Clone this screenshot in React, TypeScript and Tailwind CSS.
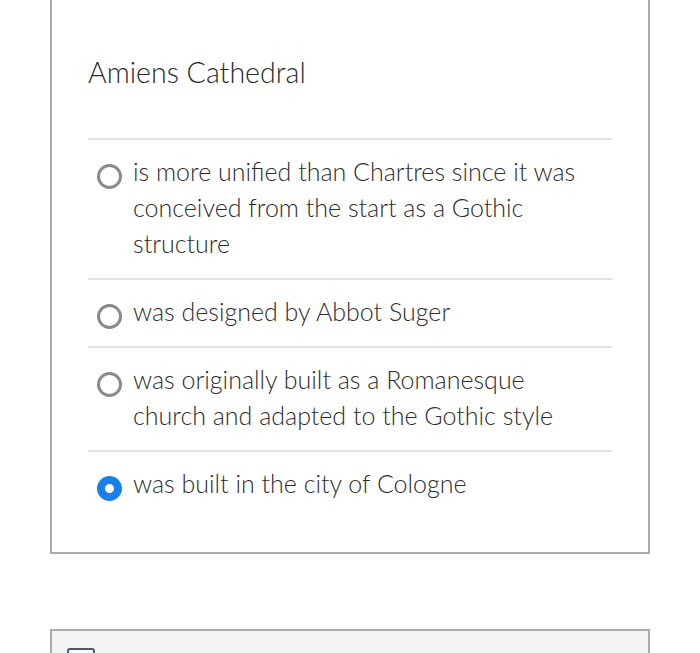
const options = [
  {
    text: 'is more unified than Chartres since it was conceived from the start as a Gothic structure',
    selected: false,
  },
  { text: 'was designed by Abbot Suger', selected: false },
  {
    text: 'was originally built as a Romanesque church and adapted to the Gothic style',
    selected: false,
  },
  { text: 'was built in the city of Cologne', selected: true },
];

function Radio({ selected }: { selected: boolean }) {
  return selected ? (
    <span className="mt-[11px] ml-[9px] box-border h-[25px] w-[25px] shrink-0 rounded-full border-[8px] border-[#1a7fe8] bg-white" />
  ) : (
    <span className="mt-[11px] ml-[9px] box-border h-[25px] w-[25px] shrink-0 rounded-full border-[3px] border-[#8a8a8a] bg-white" />
  );
}

export default function App() {
  return (
    <div
      className="h-[653px] w-[700px] overflow-hidden bg-white"
      style={{ fontFamily: 'Lato, "Open Sans", sans-serif' }}
    >
      {/* Question card */}
      <div className="-mt-[10px] ml-[50px] w-[600px] border-2 border-[#ababab] bg-white px-[36px] pt-[62px] pb-[51px]">
        <h2 className="text-[28.6px] leading-[36px] font-light text-[#2b2b2b]">Amiens Cathedral</h2>
        <div className="mt-[48px]">
          {options.map((o, i) => (
            <label
              key={i}
              className="flex gap-[11px] border-t-2 border-[#e2e2e2] pt-[13px] pb-[17px] last:pb-0"
            >
              <Radio selected={o.selected} />
              <span className="max-w-[458px] text-[25px] leading-[36px] font-light text-[#2e2e2e]">
                {o.text}
              </span>
            </label>
          ))}
        </div>
      </div>

      {/* Next card */}
      <div className="mt-[75px] ml-[50px] h-[60px] w-[600px] border-2 border-[#ababab] bg-[#f4f4f4] pt-[17px] pl-[15px]">
        <div className="h-[24px] w-[28px] rounded-[3px] border-2 border-[#4b5870] bg-white" />
      </div>
    </div>
  );
}
